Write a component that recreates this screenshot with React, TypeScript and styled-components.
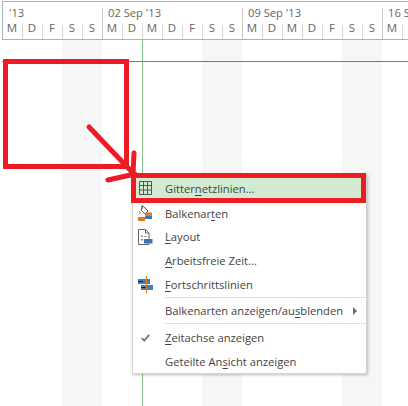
import React from "react";
import styled, { createGlobalStyle } from "styled-components";

const Global = createGlobalStyle`
  html, body { margin: 0; padding: 0; background: #fff; }
  #root { width: 408px; height: 406px; overflow: hidden; }
`;
const Page = styled.div`
  position: relative;
  width: 408px;
  height: 406px;
  overflow: hidden;
  background: #fff;
  font-family: "Open Sans", "Noto Sans", sans-serif;
`;
const Chart = styled.div`
  display: flex;
  flex-direction: column;
  height: 405px;
  margin: 1px 0 0 2px;
  border-top: 1px solid #b1b1b1;
  border-left: 1px solid #b1b1b1;
`;
const Timescale = styled.div`
  display: flex;
  height: 37px;
  flex: none;
  border-bottom: 1px solid #b1b1b1;
`;
const Week = styled.div<{ $cols: number; $first?: boolean }>`
  position: relative;
  flex: none;
  width: ${(p) => p.$cols * 20}px;
  margin-left: ${(p) => (p.$first ? -1 : 0)}px;
  display: flex;
  flex-direction: column;
`;
const WeekLabel = styled.div<{ $first?: boolean }>`
  height: 18px;
  padding: 3px 0 0 ${(p) => (p.$first ? 7 : 6)}px;
  box-sizing: border-box;
  font-size: 11.2px;
  line-height: 15px;
  color: #666;
  white-space: nowrap;
`;
const WeekTick = styled.span`
  position: absolute;
  left: 0;
  top: 6px;
  bottom: 0;
  width: 1px;
  background: #c8c8c8;
`;
const Days = styled.div`
  display: flex;
  flex: 1;
`;
const Day = styled.div`
  position: relative;
  width: 20px;
  text-align: center;
  font-size: 11.5px;
  line-height: 16px;
  color: #666;
  &:not(:first-child)::before {
    content: "";
    position: absolute;
    left: 0;
    top: 5px;
    bottom: 0;
    width: 1px;
    background: #d6d6d6;
  }
`;
const Body = styled.div`
  position: relative;
  flex: 1;
  display: flex;
  margin-left: -1px;
`;
const Column = styled.div<{ $weekend?: boolean }>`
  flex: none;
  width: 20px;
  background: ${(p) => (p.$weekend ? "#f6f6f6" : "#fff")};
`;
const TaskLine = styled.div`
  position: absolute;
  left: 0;
  right: 0;
  top: 21px;
  height: 1px;
  background: #7a7a7a;
`;
const Today = styled.div`
  position: absolute;
  left: 140px;
  top: 0;
  bottom: 0;
  width: 1px;
  background: #86c288;
`;
const Menu = styled.div`
  position: absolute;
  left: 132px;
  top: 174px;
  width: 235px;
  height: 200px;
  box-sizing: border-box;
  padding: 3px 0 0;
  background: #fff;
  border: 1px solid #d4d4d4;
  box-shadow: 1px 1px 3px rgba(0, 0, 0, 0.25);
  display: flex;
  flex-direction: column;
`;
const Item = styled.div<{ $active?: boolean; $h?: number; $gapAfter?: number }>`
  display: flex;
  align-items: center;
  flex: none;
  height: ${(p) => p.$h ?? 24}px;
  margin-bottom: ${(p) => p.$gapAfter ?? 0}px;
  background: ${(p) => (p.$active ? "#d0ebcf" : "transparent")};
  font-size: 11.2px;
  color: #444;
  white-space: nowrap;
`;
const IconCell = styled.span`
  flex: none;
  width: 25px;
  margin-right: 7px;
  height: 100%;
  display: flex;
  align-items: center;
  justify-content: center;
`;
const Text = styled.span`
  flex: 1;
  u { text-underline-offset: 2px; text-decoration-thickness: 1px; }
`;
const Chevron = styled.span`
  width: 0;
  height: 0;
  margin-right: 9px;
  border-left: 4px solid #6a6a6a;
  border-top: 4px solid transparent;
  border-bottom: 4px solid transparent;
`;
const Separator = styled.div`
  flex: none;
  height: 1px;
  margin: 1px 0 1px 31px;
  background: #e0e0e4;
`;
const Frame = styled.div<{ $l: number; $t: number; $w: number; $h: number }>`
  position: absolute;
  left: ${(p) => p.$l}px;
  top: ${(p) => p.$t}px;
  width: ${(p) => p.$w}px;
  height: ${(p) => p.$h}px;
  box-sizing: border-box;
  border: 5px solid #ed1c24;
  pointer-events: none;
`;
const Overlay = styled.svg`
  position: absolute;
  left: 0;
  top: 0;
  pointer-events: none;
`;

const weeks = [
  { label: "'13", days: ["M", "D", "F", "S", "S"], first: true },
  { label: "02 Sep '13", days: ["M", "D", "M", "D", "F", "S", "S"] },
  { label: "09 Sep '13", days: ["M", "D", "M", "D", "F", "S", "S"] },
  { label: "16 Sep '13", days: ["M", "D"] },
];

const weekend = Array.from({ length: 20 }, (_, i) => (i + 2) % 7 === 5 || (i + 2) % 7 === 6);
weekend[3] = true;
weekend[4] = true;

const GridIcon = () => (
  <svg width="13" height="14" viewBox="0 0 13 14" fill="none" stroke="#555" strokeWidth="1">
    <path d="M.5.5h12v13H.5zM.5 4.5h12M.5 9h12M4.5.5v13M8.5.5v13" />
  </svg>
);
const BarStylesIcon = () => (
  <svg width="15" height="18" viewBox="0 0 15 18">
    <path d="M5 2l5 5-3 3-4-4z" fill="#fff" stroke="#555" />
    <path d="M4 1v4" stroke="#555" />
    <path d="M1 7.5h1.6v2.5H1z" fill="#e9a21c" />
    <rect x="0" y="13" width="7" height="4" fill="#e07b26" />
    <rect x="7" y="8.5" width="7" height="3" fill="#e07b26" />
    <rect x="7" y="11.5" width="7" height="3.5" fill="#3f74ad" />
  </svg>
);
const LayoutIcon = () => (
  <svg width="15" height="16" viewBox="0 0 15 16">
    <path d="M.5.5h7l3.5 3.5v11.5H.5z" fill="#fff" stroke="#666" />
    <path d="M7.5.5v3.5H11" fill="none" stroke="#666" />
    <path d="M3 6.5h2V8H3zM3 10h2v1.5H3z" fill="#888" />
    <path d="M6 7.5h3" stroke="#999" />
    <rect x="6" y="10" width="8.5" height="4.5" fill="#3f74ad" />
  </svg>
);
const ProgressIcon = () => (
  <svg width="16" height="17" viewBox="0 0 16 17">
    <rect x="0" y="3" width="12" height="5" fill="#3f7fbf" />
    <rect x="3" y="9" width="12" height="5" fill="#3f7fbf" />
    <path d="M0 5.5h5" stroke="#222" />
    <path d="M3 11.5h5" stroke="#222" />
    <path d="M8.5 0v17" stroke="#e07b26" strokeWidth="1.2" />
  </svg>
);
const CheckIcon = () => (
  <svg width="9" height="8" viewBox="0 0 9 8" fill="none" stroke="#777" strokeWidth="1.8">
    <path d="M.8 4l2.4 2.6L8.2.8" />
  </svg>
);

export default function App() {
  return (
    <Page>
      <Global />
      <Chart>
        <Timescale>
          {weeks.map((w) => (
            <Week key={w.label} $cols={w.days.length} $first={w.first}>
              {!w.first && <WeekTick />}
              <WeekLabel $first={w.first}>{w.label}</WeekLabel>
              <Days>
                {w.days.map((d, i) => (
                  <Day key={i}>{d}</Day>
                ))}
              </Days>
            </Week>
          ))}
        </Timescale>
        <Body>
          {weekend.map((we, i) => (
            <Column key={i} $weekend={we} />
          ))}
          <TaskLine />
          <Today />
        </Body>
      </Chart>
      <Menu>
        <Item $active $h={20} $gapAfter={3}>
          <IconCell><GridIcon /></IconCell>
          <Text>Gitter<u>n</u>etzlinien...</Text>
        </Item>
        <Item>
          <IconCell><BarStylesIcon /></IconCell>
          <Text>Balkenar<u>t</u>en</Text>
        </Item>
        <Item $h={23}>
          <IconCell><LayoutIcon /></IconCell>
          <Text><u>L</u>ayout</Text>
        </Item>
        <Item $h={25}>
          <IconCell />
          <Text><u>A</u>rbeitsfreie Zeit...</Text>
        </Item>
        <Item $h={23}>
          <IconCell><ProgressIcon /></IconCell>
          <Text><u>F</u>ortschrittslinien</Text>
        </Item>
        <Separator />
        <Item $h={23}>
          <IconCell />
          <Text>Balkenarten anzeigen/au<u>s</u>blenden</Text>
          <Chevron />
        </Item>
        <Separator />
        <Item $h={25}>
          <IconCell><CheckIcon /></IconCell>
          <Text><u>Z</u>eitachse anzeigen</Text>
        </Item>
        <Item $h={23}>
          <IconCell />
          <Text>Geteilte An<u>s</u>icht anzeigen</Text>
        </Item>
      </Menu>
      <Frame $l={3} $t={59} $w={126} $h={110} />
      <Frame $l={131} $t={173} $w={235} $h={30} />
      <Overlay width="408" height="406" viewBox="0 0 408 406" fill="none" stroke="#ed1c24" strokeWidth="5" strokeLinecap="round">
        <path d="M89 127L133 173M134 153L133 175M108 180L135 174" />
      </Overlay>
    </Page>
  );
}
